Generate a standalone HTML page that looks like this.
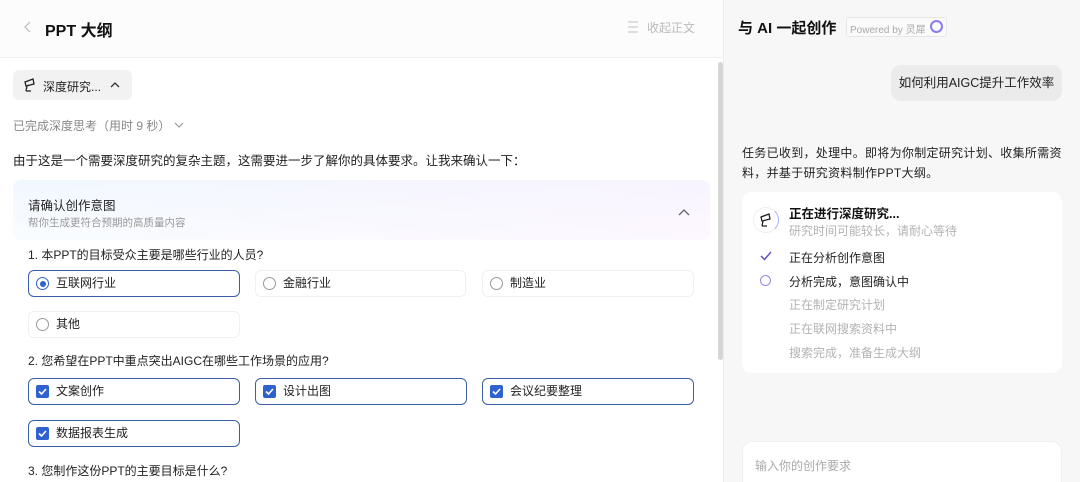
<!DOCTYPE html>
<html><head><meta charset="utf-8"><style>
*{box-sizing:border-box;margin:0;padding:0}
html,body{width:1080px;height:482px;overflow:hidden}
body{font-family:"Liberation Sans","Noto Sans CJK SC",sans-serif;background:#f7f7f8;position:relative;color:#1f1f1f}
.a{position:absolute;white-space:nowrap}
#left{position:absolute;left:0;top:0;width:724px;height:482px;background:#fff;border-right:1px solid #ececec;overflow:hidden}
.hdr{position:absolute;left:0;top:0;width:724px;height:58px;background:#fcfcfc;border-bottom:1px solid #efefef}
.opt{position:absolute;height:27px;border:1px solid #f0f0f0;border-radius:6px;font-size:12px;color:#222;padding-left:27px;line-height:25px;background:#fff}
.opt.sel{border-color:#3b5ea8}
.rad{position:absolute;left:7px;top:6px;width:13px;height:13px;border:1px solid #999;border-radius:50%}
.rad.on{border-color:#2f62cf}
.rad.on:after{content:"";position:absolute;left:2.5px;top:2.5px;width:6px;height:6px;border-radius:50%;background:#2f62cf}
.cb{position:absolute;left:7px;top:6px;width:13px;height:13px;border-radius:2px;background:#2f62cf}
.cb svg{position:absolute;left:0;top:0}
.g{color:#b3b3b3}
</style></head><body>
<div id="left">
 <div class="hdr"></div>
 <svg class="a" style="left:23px;top:20px" width="10" height="14"><path d="M7 2 L2 7 L7 12" fill="none" stroke="#bbb" stroke-width="1.2"/></svg>
 <div class="a" style="left:45px;top:17px;font-size:16px;font-weight:bold;color:#111">PPT 大纲</div>
 <svg class="a" style="left:626px;top:19px" width="14" height="16"><path d="M2 3h10M2 8h10M2 13h10" stroke="#ccc" stroke-width="1.2"/></svg>
 <div class="a" style="left:647px;top:19px;font-size:12px;color:#bbb">收起正文</div>
 <div class="a" style="left:718px;top:62px;width:5px;height:298px;background:#d6d6d6;border-radius:3px"></div>

 <div class="a" style="left:13px;top:70px;width:119px;height:30px;background:#f2f2f2;border-radius:6px"></div>
 <svg class="a" style="left:22px;top:77px" width="16" height="16"><path d="M3 5l8-3 1 5-8 2z M5 9l-1 5 M4 14h5" fill="none" stroke="#222" stroke-width="1.3"/></svg>
 <div class="a" style="left:43px;top:78px;font-size:12px;color:#222">深度研究...</div>
 <svg class="a" style="left:110px;top:81px" width="10" height="8"><path d="M1 6l4-4 4 4" fill="none" stroke="#333" stroke-width="1.3"/></svg>

 <div class="a" style="left:13px;top:117px;font-size:12px;color:#888">已完成深度思考（用时 9 秒）</div>
 <svg class="a" style="left:174px;top:121px" width="10" height="8"><path d="M1 2l4 4 4-4" fill="none" stroke="#999" stroke-width="1.2"/></svg>
 <div class="a" style="left:13px;top:150px;font-size:12.5px;color:#222">由于这是一个需要深度研究的复杂主题，这需要进一步了解你的具体要求。让我来确认一下：</div>

 <div class="a" style="left:13px;top:180px;width:697px;height:310px;border-radius:8px;background:linear-gradient(180deg,rgba(238,245,255,.8) 0,#fff 60px);"></div>
 <div class="a" style="left:13px;top:180px;width:697px;height:60px;border-radius:8px;background:linear-gradient(90deg,rgba(242,249,255,.5),rgba(252,242,255,.6))"></div>
 <div class="a" style="left:28px;top:195px;font-size:12.5px;color:#222">请确认创作意图</div>
 <div class="a" style="left:28px;top:215px;font-size:10.5px;color:#999">帮你生成更符合预期的高质量内容</div>
 <svg class="a" style="left:678px;top:208px" width="12" height="9"><path d="M1 7l5-5 5 5" fill="none" stroke="#666" stroke-width="1.3"/></svg>

 <div class="a" style="left:28px;top:246px;font-size:12px;color:#222">1. 本PPT的目标受众主要是哪些行业的人员?</div>
 <div class="opt sel a" style="left:28px;top:270px;width:212px"><span class="rad on"></span>互联网行业</div>
 <div class="opt a" style="left:255px;top:270px;width:211px"><span class="rad"></span>金融行业</div>
 <div class="opt a" style="left:482px;top:270px;width:212px"><span class="rad"></span>制造业</div>
 <div class="opt a" style="left:28px;top:311px;width:212px"><span class="rad"></span>其他</div>

 <div class="a" style="left:28px;top:352px;font-size:12px;color:#222">2. 您希望在PPT中重点突出AIGC在哪些工作场景的应用?</div>
 <div class="opt sel a" style="left:28px;top:378px;width:212px"><span class="cb"><svg width="13" height="13"><path d="M3 6.5l2.5 2.5 4.5-5" fill="none" stroke="#fff" stroke-width="1.6"/></svg></span>文案创作</div>
 <div class="opt sel a" style="left:255px;top:378px;width:212px"><span class="cb"><svg width="13" height="13"><path d="M3 6.5l2.5 2.5 4.5-5" fill="none" stroke="#fff" stroke-width="1.6"/></svg></span>设计出图</div>
 <div class="opt sel a" style="left:482px;top:378px;width:212px"><span class="cb"><svg width="13" height="13"><path d="M3 6.5l2.5 2.5 4.5-5" fill="none" stroke="#fff" stroke-width="1.6"/></svg></span>会议纪要整理</div>
 <div class="opt sel a" style="left:28px;top:420px;width:212px"><span class="cb"><svg width="13" height="13"><path d="M3 6.5l2.5 2.5 4.5-5" fill="none" stroke="#fff" stroke-width="1.6"/></svg></span>数据报表生成</div>
 <div class="a" style="left:28px;top:462px;font-size:12px;color:#222">3. 您制作这份PPT的主要目标是什么?</div>
</div>

<div class="a" style="left:738px;top:17px;font-size:15px;font-weight:bold;color:#111">与 AI 一起创作</div>
<div class="a" style="left:846px;top:17px;width:101px;height:20px;border:1px solid #e6e6e6;border-radius:3px;background:#fafafa"></div>
<div class="a" style="left:850px;top:21px;font-size:10px;color:#aaa">Powered by 灵犀</div>
<div class="a" style="left:930px;top:20px;width:13px;height:13px;border:2px solid #8a7cf0;border-radius:50%"></div>

<div class="a" style="left:891px;top:65px;width:171px;height:36px;background:#ebebeb;border-radius:10px;font-size:12.5px;line-height:36px;text-align:center;color:#222">如何利用AIGC提升工作效率</div>

<div class="a" style="left:742px;top:143px;font-size:12px;line-height:20px;color:#222;white-space:normal;width:322px;letter-spacing:.3px">任务已收到，处理中。即将为你制定研究计划、收集所需资料，并基于研究资料制作PPT大纲。</div>

<div class="a" style="left:742px;top:192px;width:320px;height:181px;background:#fff;border-radius:10px"></div>
<div class="a" style="left:753px;top:207px;width:26px;height:26px;border-radius:50%;border:1.5px solid #eee;border-right-color:#a8b8f0"></div>
<svg class="a" style="left:758px;top:212px" width="16" height="16"><path d="M3 5l8-3 1 5-8 2z M5 9l-1 5 M4 14h5" fill="none" stroke="#222" stroke-width="1.3"/></svg>
<div class="a" style="left:789px;top:203px;font-size:12.5px;font-weight:bold;color:#111">正在进行深度研究...</div>
<div class="a" style="left:789px;top:222px;font-size:12px" ><span class="g">研究时间可能较长，请耐心等待</span></div>
<svg class="a" style="left:759px;top:250px" width="14" height="12"><path d="M2 6l3.5 3.5L12 2" fill="none" stroke="#6a4fc8" stroke-width="1.5"/></svg>
<div class="a" style="left:789px;top:249px;font-size:12px;color:#222">正在分析创作意图</div>
<div class="a" style="left:760px;top:275px;width:11px;height:11px;border:1.5px solid #9b84e0;border-radius:50%"></div>
<div class="a" style="left:789px;top:273px;font-size:12px;color:#222">分析完成，意图确认中</div>
<div class="a g" style="left:789px;top:296px;font-size:12px">正在制定研究计划</div>
<div class="a g" style="left:789px;top:320px;font-size:12px">正在联网搜索资料中</div>
<div class="a g" style="left:789px;top:344px;font-size:12px">搜索完成，准备生成大纲</div>

<div class="a" style="left:742px;top:441px;width:320px;height:41px;background:#fff;border-radius:10px 10px 0 0;border:1px solid #f0f0f0;border-bottom:none"></div>
<div class="a" style="left:755px;top:457px;font-size:12px;color:#aaa">输入你的创作要求</div>
</body></html>
